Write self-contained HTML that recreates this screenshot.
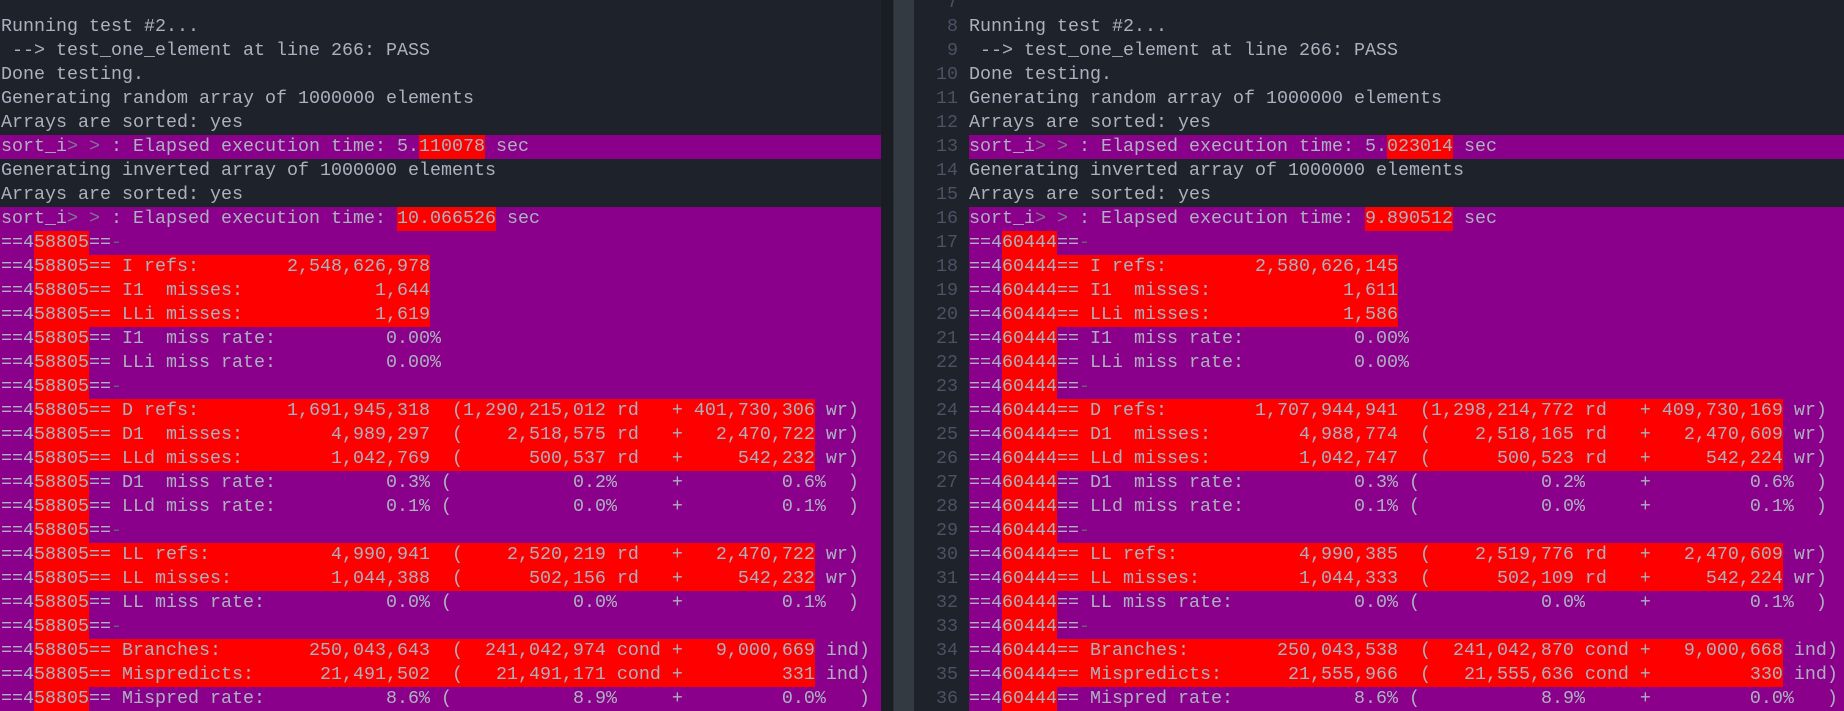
<!DOCTYPE html>
<html><head><meta charset="utf-8"><style>
*{margin:0;padding:0;box-sizing:border-box}
body{width:1844px;height:711px;overflow:hidden;background:#1e222a;position:relative;font-family:"Liberation Mono",monospace;font-size:18.333px;color:#abb2bf}
.pane{position:absolute;top:-9px;overflow:hidden}
#L{left:0;width:881px}
#R{left:969px;width:875px}
.row{height:24px;line-height:24px;white-space:pre;padding-left:1px}
#R .row{padding-left:0}
.p{background:#8b008b}
.r{background:#ff0000;display:inline-block;height:24px;vertical-align:top}
.d{color:#7d7690}
.g{color:#5b6b63}
#div1{position:absolute;left:881px;top:0;width:12px;height:711px;background:#1a1d23}
#div2{position:absolute;left:893px;top:0;width:21px;height:711px;background:#343a42;border-left:1px solid #2a2f36}
#gut{position:absolute;left:914px;top:-9px;width:44px;text-align:right;color:#4b5263}
#gut div{height:24px;line-height:24px}
</style></head><body>
<div id="div1"></div><div id="div2"></div>
<div id="gut"><div>7</div><div>8</div><div>9</div><div>10</div><div>11</div><div>12</div><div>13</div><div>14</div><div>15</div><div>16</div><div>17</div><div>18</div><div>19</div><div>20</div><div>21</div><div>22</div><div>23</div><div>24</div><div>25</div><div>26</div><div>27</div><div>28</div><div>29</div><div>30</div><div>31</div><div>32</div><div>33</div><div>34</div><div>35</div><div>36</div></div>
<div class="pane" id="L">
<div class="row"></div>
<div class="row">Running test #2...</div>
<div class="row"> --&gt; test_one_element at line 266: PASS</div>
<div class="row">Done testing.</div>
<div class="row">Generating random array of 1000000 elements</div>
<div class="row">Arrays are sorted: yes</div>
<div class="row p">sort_i<span class="d">&gt; &gt;</span> : Elapsed execution time: 5.<span class="r">110078</span> sec</div>
<div class="row">Generating inverted array of 1000000 elements</div>
<div class="row">Arrays are sorted: yes</div>
<div class="row p">sort_i<span class="d">&gt; &gt;</span> : Elapsed execution time: <span class="r">10.066526</span> sec</div>
<div class="row p">==4<span class="r">58805</span>==<span class="g">-</span></div>
<div class="row p">==4<span class="r">58805== I refs:        2,548,626,978</span></div>
<div class="row p">==4<span class="r">58805== I1  misses:            1,644</span></div>
<div class="row p">==4<span class="r">58805== LLi misses:            1,619</span></div>
<div class="row p">==4<span class="r">58805</span>== I1  miss rate:          0.00%</div>
<div class="row p">==4<span class="r">58805</span>== LLi miss rate:          0.00%</div>
<div class="row p">==4<span class="r">58805</span>==<span class="g">-</span></div>
<div class="row p">==4<span class="r">58805== D refs:        1,691,945,318  (1,290,215,012 rd   + 401,730,306</span> wr)</div>
<div class="row p">==4<span class="r">58805== D1  misses:        4,989,297  (    2,518,575 rd   +   2,470,722</span> wr)</div>
<div class="row p">==4<span class="r">58805== LLd misses:        1,042,769  (      500,537 rd   +     542,232</span> wr)</div>
<div class="row p">==4<span class="r">58805</span>== D1  miss rate:          0.3% (           0.2%     +         0.6%  )</div>
<div class="row p">==4<span class="r">58805</span>== LLd miss rate:          0.1% (           0.0%     +         0.1%  )</div>
<div class="row p">==4<span class="r">58805</span>==<span class="g">-</span></div>
<div class="row p">==4<span class="r">58805== LL refs:           4,990,941  (    2,520,219 rd   +   2,470,722</span> wr)</div>
<div class="row p">==4<span class="r">58805== LL misses:         1,044,388  (      502,156 rd   +     542,232</span> wr)</div>
<div class="row p">==4<span class="r">58805</span>== LL miss rate:           0.0% (           0.0%     +         0.1%  )</div>
<div class="row p">==4<span class="r">58805</span>==<span class="g">-</span></div>
<div class="row p">==4<span class="r">58805== Branches:        250,043,643  (  241,042,974 cond +   9,000,669</span> ind)</div>
<div class="row p">==4<span class="r">58805== Mispredicts:      21,491,502  (   21,491,171 cond +         331</span> ind)</div>
<div class="row p">==4<span class="r">58805</span>== Mispred rate:           8.6% (           8.9%     +         0.0%   )</div>
</div>
<div class="pane" id="R">
<div class="row"></div>
<div class="row">Running test #2...</div>
<div class="row"> --&gt; test_one_element at line 266: PASS</div>
<div class="row">Done testing.</div>
<div class="row">Generating random array of 1000000 elements</div>
<div class="row">Arrays are sorted: yes</div>
<div class="row p">sort_i<span class="d">&gt; &gt;</span> : Elapsed execution time: 5.<span class="r">023014</span> sec</div>
<div class="row">Generating inverted array of 1000000 elements</div>
<div class="row">Arrays are sorted: yes</div>
<div class="row p">sort_i<span class="d">&gt; &gt;</span> : Elapsed execution time: <span class="r">9.890512</span> sec</div>
<div class="row p">==4<span class="r">60444</span>==<span class="g">-</span></div>
<div class="row p">==4<span class="r">60444== I refs:        2,580,626,145</span></div>
<div class="row p">==4<span class="r">60444== I1  misses:            1,611</span></div>
<div class="row p">==4<span class="r">60444== LLi misses:            1,586</span></div>
<div class="row p">==4<span class="r">60444</span>== I1  miss rate:          0.00%</div>
<div class="row p">==4<span class="r">60444</span>== LLi miss rate:          0.00%</div>
<div class="row p">==4<span class="r">60444</span>==<span class="g">-</span></div>
<div class="row p">==4<span class="r">60444== D refs:        1,707,944,941  (1,298,214,772 rd   + 409,730,169</span> wr)</div>
<div class="row p">==4<span class="r">60444== D1  misses:        4,988,774  (    2,518,165 rd   +   2,470,609</span> wr)</div>
<div class="row p">==4<span class="r">60444== LLd misses:        1,042,747  (      500,523 rd   +     542,224</span> wr)</div>
<div class="row p">==4<span class="r">60444</span>== D1  miss rate:          0.3% (           0.2%     +         0.6%  )</div>
<div class="row p">==4<span class="r">60444</span>== LLd miss rate:          0.1% (           0.0%     +         0.1%  )</div>
<div class="row p">==4<span class="r">60444</span>==<span class="g">-</span></div>
<div class="row p">==4<span class="r">60444== LL refs:           4,990,385  (    2,519,776 rd   +   2,470,609</span> wr)</div>
<div class="row p">==4<span class="r">60444== LL misses:         1,044,333  (      502,109 rd   +     542,224</span> wr)</div>
<div class="row p">==4<span class="r">60444</span>== LL miss rate:           0.0% (           0.0%     +         0.1%  )</div>
<div class="row p">==4<span class="r">60444</span>==<span class="g">-</span></div>
<div class="row p">==4<span class="r">60444== Branches:        250,043,538  (  241,042,870 cond +   9,000,668</span> ind)</div>
<div class="row p">==4<span class="r">60444== Mispredicts:      21,555,966  (   21,555,636 cond +         330</span> ind)</div>
<div class="row p">==4<span class="r">60444</span>== Mispred rate:           8.6% (           8.9%     +         0.0%   )</div>
</div>
</body></html>
